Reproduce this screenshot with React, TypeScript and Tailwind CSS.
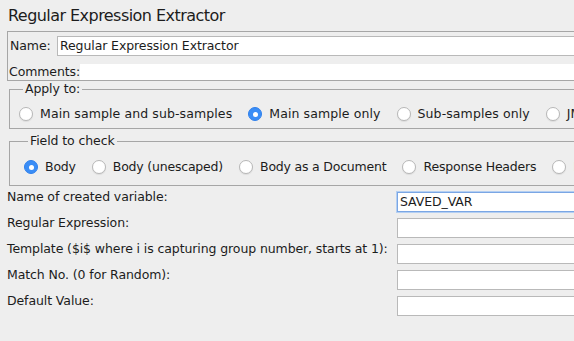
const applyTo = [
  { label: "Main sample and sub-samples", checked: false },
  { label: "Main sample only", checked: true },
  { label: "Sub-samples only", checked: false },
  { label: "JMeter Variable", checked: false },
];

const fieldToCheck = [
  { label: "Body", checked: true },
  { label: "Body (unescaped)", checked: false },
  { label: "Body as a Document", checked: false },
  { label: "Response Headers", checked: false },
  { label: "Request Headers", checked: false },
];

const rows = [
  { label: "Name of created variable:", value: "SAVED_VAR", focused: true },
  { label: "Regular Expression:", value: "" },
  { label: "Template ($i$ where i is capturing group number, starts at 1):", value: "" },
  { label: "Match No. (0 for Random):", value: "" },
  { label: "Default Value:", value: "" },
];

function Radio({ checked }: { checked: boolean }) {
  if (checked) {
    return (
      <span className="flex h-[14px] w-[14px] shrink-0 items-center justify-center rounded-full border border-[#2f80ec] bg-[#3a8df6]">
        <span className="h-[5px] w-[5px] rounded-full bg-white" />
      </span>
    );
  }
  return (
    <span className="h-[14px] w-[14px] shrink-0 rounded-full border border-[#b7b7b7] bg-white shadow-[0_1px_1px_rgba(0,0,0,0.08)]" />
  );
}

function RadioGroup({ items, tight }: { items: { label: string; checked: boolean }[]; tight?: boolean }) {
  return (
    <div
      className={
        tight
          ? "flex h-[16px] items-center gap-[16px] whitespace-nowrap tracking-[-0.2px]"
          : "flex h-[16px] items-center gap-[16px] whitespace-nowrap tracking-[0.1px]"
      }
    >
      {items.map((it) => (
        <label key={it.label} className="flex items-center gap-[7px]">
          <Radio checked={it.checked} />
          <span className="leading-[16px]">{it.label}</span>
        </label>
      ))}
    </div>
  );
}

export default function App() {
  return (
    <div className="h-[341px] w-[574px] overflow-hidden bg-[#eeeeee] font-['DejaVu_Sans',sans-serif] text-[12.5px] tracking-[-0.1px] text-[#1c1c1c]">
      <div className="w-[640px]">
        <h1 className="pl-[8px] pt-[6px] text-[16px] leading-[20px] tracking-[-0.55px]">Regular Expression Extractor</h1>

        <div className="ml-[7px] mt-[5px] border border-[#a6a6a6]">
          <div className="mt-[4px] flex h-[20px] items-center">
            <span className="w-[49px] shrink-0 pl-[2px]">Name:</span>
            <div className="flex h-[20px] flex-1 items-center border border-[#b9b9b9] bg-white pl-[2px]">
              Regular Expression Extractor
            </div>
          </div>
          <div className="mt-[8px] flex h-[16px] items-center">
            <span className="shrink-0 pl-[1px]">Comments:</span>
            <div className="h-[16px] flex-1 bg-white" />
          </div>
        </div>

        <fieldset className="ml-[9px] border border-[#a6a6a6] pb-[6px] pl-[9px] pt-[9px]">
          <legend className="ml-[4px] px-[2px] leading-[16px]">Apply to:</legend>
          <RadioGroup items={applyTo} />
        </fieldset>

        <fieldset className="ml-[9px] mt-[4px] border border-[#a6a6a6] pb-[10px] pl-[14px] pt-[10px]">
          <legend className="ml-[4px] px-[2px] leading-[16px]">Field to check</legend>
          <RadioGroup items={fieldToCheck} tight />
        </fieldset>

        <div className="mt-[6px] flex flex-col">
          {rows.map((r) => (
            <div key={r.label} className="flex h-[26px] items-start">
              <span className="w-[397px] shrink-0 whitespace-nowrap pl-[7px] leading-[10px]">{r.label}</span>
              <div
                className={
                  r.focused
                    ? "flex h-[20px] flex-1 items-center border border-[#7aa6e4] bg-white pl-[2px] shadow-[0_0_0_1px_#b4cff2]"
                    : "flex h-[20px] flex-1 items-center border border-[#b9b9b9] bg-white pl-[2px]"
                }
              >
                {r.value}
              </div>
            </div>
          ))}
        </div>
      </div>
    </div>
  );
}
